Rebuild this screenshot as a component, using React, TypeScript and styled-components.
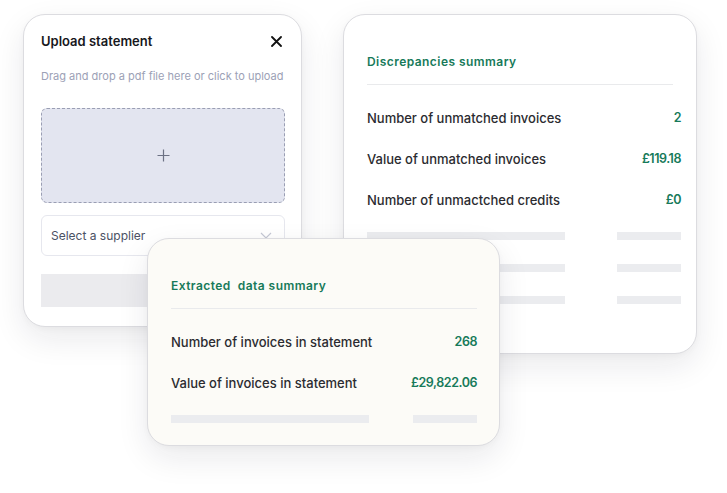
import React from "react";
import styled, { createGlobalStyle } from "styled-components";

const Global = createGlobalStyle`
  html, body { margin: 0; padding: 0; background: #ffffff; }
  body { font-family: Inter, "Noto Sans", sans-serif; -webkit-font-smoothing: antialiased; }
  * { box-sizing: border-box; }
`;

const Canvas = styled.div`
  position: relative;
  width: 727px;
  height: 493px;
  overflow: hidden;
  background: #ffffff;
`;

const Card = styled.div<{ $x: number; $y: number; $w: number; $h: number; $bg?: string }>`
  position: absolute;
  left: ${(p) => p.$x}px;
  top: ${(p) => p.$y}px;
  width: ${(p) => p.$w}px;
  height: ${(p) => p.$h}px;
  background: ${(p) => p.$bg ?? "#ffffff"};
  border: 1px solid #dcdce0;
  border-radius: 22px;
  box-shadow: 0 12px 32px rgba(20, 20, 40, 0.09), 0 2px 6px rgba(20, 20, 40, 0.03);
  display: flex;
  flex-direction: column;
`;

const UploadBody = styled.div`
  display: flex;
  flex-direction: column;
  padding: 17px 16px 0 17px;
`;

const UploadHeader = styled.div`
  display: flex;
  align-items: center;
  justify-content: space-between;
  height: 18px;
`;

const UploadTitle = styled.div`
  font-size: 13px;
  font-weight: 600;
  color: #17171c;
`;

const CloseButton = styled.div`
  width: 12px;
  height: 12px;
  margin-right: 3px;
  display: flex;
  align-items: center;
  justify-content: center;
`;

const Hint = styled.div`
  margin-top: 18px;
  font-size: 11px;
  line-height: 16px;
  color: #9ca1b6;
  white-space: nowrap;
`;

const DropZone = styled.div`
  margin-top: 24px;
  height: 95px;
  background: #e3e5f0;
  border: 1.5px dashed #9a9eb3;
  border-radius: 6px;
  display: flex;
  align-items: center;
  justify-content: center;
`;

const Select = styled.div`
  margin-top: 12px;
  height: 41px;
  border: 1px solid #e6e7ee;
  border-radius: 6px;
  display: flex;
  align-items: center;
  justify-content: space-between;
  padding: 0 12px 0 9px;
  font-size: 12px;
  color: #4b5264;
`;

const SubmitBar = styled.div`
  margin-top: 18px;
  height: 33px;
  background: #ebebee;
`;

const SummaryBody = styled.div<{ $padRight: number }>`
  display: flex;
  flex-direction: column;
  padding: 39px ${(p) => p.$padRight}px 0 23px;
`;

const SummaryTitle = styled.div`
  font-size: 12px;
  line-height: 16px;
  font-weight: 600;
  letter-spacing: 0.45px;
  color: #177a5a;
  white-space: pre;
`;

const Divider = styled.div<{ $inset: number }>`
  margin-top: 14px;
  margin-right: ${(p) => p.$inset}px;
  height: 1px;
  background: #e9eaec;
`;

const Rows = styled.div`
  margin-top: 12px;
  display: flex;
  flex-direction: column;
`;

const Row = styled.div`
  height: 41px;
  display: flex;
  align-items: center;
  justify-content: space-between;
  font-size: 13px;
  font-weight: 500;
`;

const Label = styled.span`
  color: #2b2b30;
`;

const Value = styled.span`
  color: #177a5a;
  font-size: 12.5px;
  font-weight: 600;
  letter-spacing: -0.45px;
`;

const Skeletons = styled.div`
  margin-top: 12px;
  display: flex;
  flex-direction: column;
  gap: 24px;
`;

const SkeletonRow = styled.div`
  display: flex;
  justify-content: space-between;
`;

const Bar = styled.div<{ $w: number }>`
  width: ${(p) => p.$w}px;
  height: 8px;
  background: #ebecef;
`;

const CloseIcon = () => (
  <svg width="11" height="11" viewBox="0 0 11 11">
    <path d="M1 1 L10 10 M10 1 L1 10" stroke="#111" strokeWidth="1.8" strokeLinecap="round" />
  </svg>
);

const PlusIcon = () => (
  <svg width="13" height="13" viewBox="0 0 13 13">
    <path d="M6.5 0.5 V12.5 M0.5 6.5 H12.5" stroke="#6c7184" strokeWidth="1.2" />
  </svg>
);

const ChevronIcon = () => (
  <svg width="12" height="7" viewBox="0 0 12 7">
    <path d="M1 1 L6 6 L11 1" stroke="#c5c8d4" strokeWidth="1.2" fill="none" />
  </svg>
);

type Item = { label: string; value: string };

const Summary = ({
  title,
  items,
  bars,
  padRight,
  inset,
}: {
  title: string;
  items: Item[];
  bars: number;
  padRight: number;
  inset: number;
}) => (
  <SummaryBody $padRight={padRight}>
    <SummaryTitle>{title}</SummaryTitle>
    <Divider $inset={inset} />
    <Rows>
      {items.map((it) => (
        <Row key={it.label}>
          <Label>{it.label}</Label>
          <Value>{it.value}</Value>
        </Row>
      ))}
    </Rows>
    <Skeletons>
      {Array.from({ length: bars }).map((_, i) => (
        <SkeletonRow key={i}>
          <Bar $w={198} />
          <Bar $w={64} />
        </SkeletonRow>
      ))}
    </Skeletons>
  </SummaryBody>
);

export default function App() {
  return (
    <Canvas>
      <Global />
      <Card $x={23} $y={14} $w={279} $h={313}>
        <UploadBody>
          <UploadHeader>
            <UploadTitle>Upload statement</UploadTitle>
            <CloseButton>
              <CloseIcon />
            </CloseButton>
          </UploadHeader>
          <Hint>Drag and drop a pdf file here or click to upload</Hint>
          <DropZone>
            <PlusIcon />
          </DropZone>
          <Select>
            <span>Select a supplier</span>
            <ChevronIcon />
          </Select>
          <SubmitBar />
        </UploadBody>
      </Card>
      <Card $x={343} $y={14} $w={354} $h={340}>
        <Summary
          title="Discrepancies summary"
          padRight={15}
          inset={8}
          bars={3}
          items={[
            { label: "Number of unmatched invoices", value: "2" },
            { label: "Value of unmatched invoices", value: "£119.18" },
            { label: "Number of unmactched credits", value: "£0" },
          ]}
        />
      </Card>
      <Card $x={147} $y={238} $w={353} $h={208} $bg="#fcfbf7">
        <Summary
          title="Extracted  data summary"
          padRight={22}
          inset={0}
          bars={1}
          items={[
            { label: "Number of invoices in statement", value: "268" },
            { label: "Value of invoices in statement", value: "£29,822.06" },
          ]}
        />
      </Card>
    </Canvas>
  );
}
